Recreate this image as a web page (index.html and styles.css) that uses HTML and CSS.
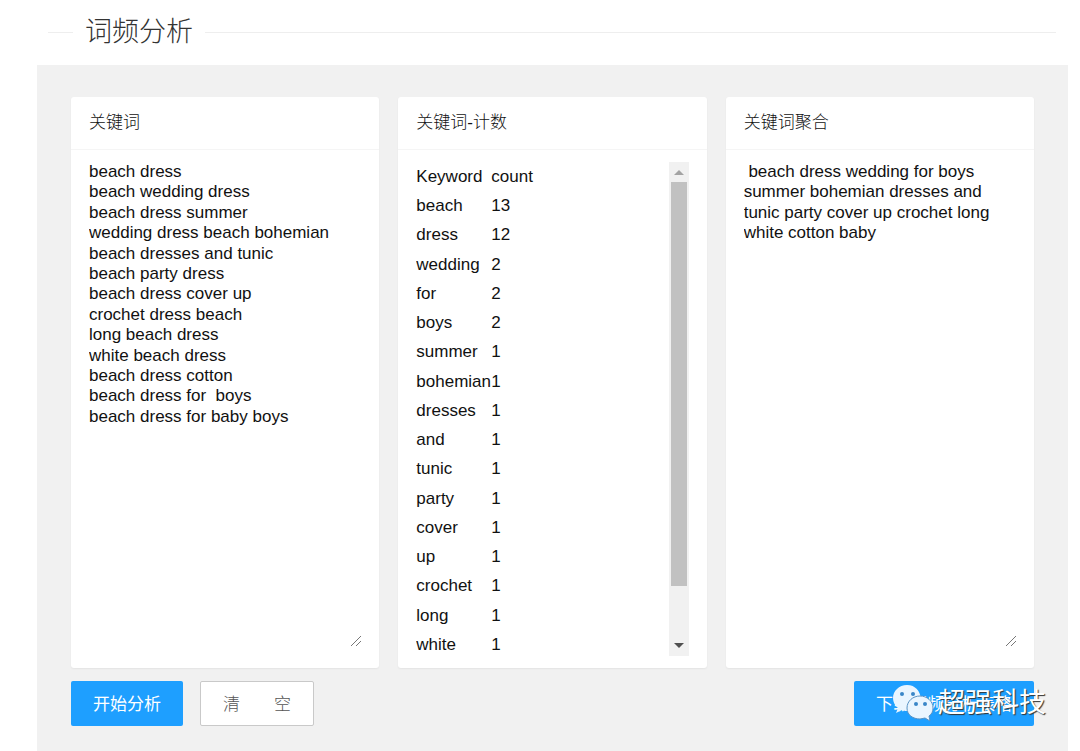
FILE: index.html
```html
<!DOCTYPE html>
<html lang="zh-CN">
<head>
    <meta charset="UTF-8">
    <meta name="viewport" content="width=device-width, initial-scale=1.0">
    <title>词频分析</title>
    <link rel="stylesheet" href="styles.css">
</head>
<body>
    <h1 class="page-title">词频分析</h1>

    <main class="panel">
        <div class="cards">
            <section class="card">
                <h2 class="card-header"><label for="keywords">关键词</label></h2>
                <div class="card-body">
                    <textarea id="keywords" class="text-box" spellcheck="false">beach dress
beach wedding dress
beach dress summer
wedding dress beach bohemian
beach dresses and tunic
beach party dress
beach dress cover up
crochet dress beach
long beach dress
white beach dress
beach dress cotton
beach dress for  boys
beach dress for baby boys</textarea>
                    <svg class="grip" viewBox="0 0 12 12"><path d="M1 11L11 1M6 11L11 6"/></svg>
                </div>
            </section>

            <section class="card">
                <h2 class="card-header">关键词-计数</h2>
                <div class="card-body">
                    <div class="scroll-box">
                        <table class="count-table">
                            <thead>
                                <tr><th>Keyword</th><th>count</th></tr>
                            </thead>
                            <tbody>
                                <tr><td>beach</td><td>13</td></tr>
                                <tr><td>dress</td><td>12</td></tr>
                                <tr><td>wedding</td><td>2</td></tr>
                                <tr><td>for</td><td>2</td></tr>
                                <tr><td>boys</td><td>2</td></tr>
                                <tr><td>summer</td><td>1</td></tr>
                                <tr><td>bohemian</td><td>1</td></tr>
                                <tr><td>dresses</td><td>1</td></tr>
                                <tr><td>and</td><td>1</td></tr>
                                <tr><td>tunic</td><td>1</td></tr>
                                <tr><td>party</td><td>1</td></tr>
                                <tr><td>cover</td><td>1</td></tr>
                                <tr><td>up</td><td>1</td></tr>
                                <tr><td>crochet</td><td>1</td></tr>
                                <tr><td>long</td><td>1</td></tr>
                                <tr><td>white</td><td>1</td></tr>
                            </tbody>
                        </table>
                    </div>
                    <div class="scrollbar">
                        <svg class="arrow arrow-off" viewBox="0 0 20 20"><path d="M5 13L10 8L15 13Z"/></svg>
                        <div class="track"><div class="thumb"></div></div>
                        <svg class="arrow" viewBox="0 0 20 20"><path d="M5 7L10 12L15 7Z"/></svg>
                    </div>
                </div>
            </section>

            <section class="card">
                <h2 class="card-header"><label for="merged">关键词聚合</label></h2>
                <div class="card-body">
                    <textarea id="merged" class="text-box" spellcheck="false"> beach dress wedding for boys summer bohemian dresses and tunic party cover up crochet long white cotton baby</textarea>
                    <svg class="grip" viewBox="0 0 12 12"><path d="M1 11L11 1M6 11L11 6"/></svg>
                </div>
            </section>
        </div>

        <div class="actions">
            <button type="button" class="btn">开始分析</button>
            <button type="button" class="btn btn-plain">清　　空</button>
            <div class="download">
                <button type="button" class="btn">下载词频分析表格</button>
                <div class="watermark">
                    <svg class="wechat" viewBox="0 0 42 38">
                        <path class="bubble" d="M15 1C7 1 1 7 1 14C1 18 3 22 6 24L4 29L10 26C12 27 15 27 17 27C34 27 32 1 15 1Z"/>
                        <circle class="eye" cx="10" cy="10" r="2"/>
                        <circle class="eye" cx="21" cy="10" r="2"/>
                        <path class="bubble front" d="M28 12C21 12 15 17 15 24C15 31 21 35 28 35L33 34L38 37L37 32C40 30 41 27 41 24C41 17 35 12 28 12Z"/>
                        <circle class="eye" cx="24" cy="20" r="2"/>
                        <circle class="eye" cx="33" cy="20" r="2"/>
                    </svg>
                    <span>超强科技</span>
                </div>
            </div>
        </div>
    </main>
</body>
</html>
```
FILE: styles.css
```css
* {
    box-sizing: border-box;
}
body {
    margin: 0;
    padding: 12px 12px 0 37px;
    min-height: 100vh;
    display: flex;
    flex-direction: column;
    font-family: "Liberation Sans", "Noto Sans CJK SC", sans-serif;
    font-size: 17px;
    color: #111;
    background-color: #fff;
}
.page-title {
    display: flex;
    align-items: center;
    gap: 12px;
    margin: 0 12px 13px 11px;
    font-size: 27px;
    font-weight: 300;
    line-height: 40px;
    color: #333;
}
.page-title::before,
.page-title::after {
    content: "";
    height: 1px;
    background-color: #eee;
}
.page-title::before {
    width: 25px;
}
.page-title::after {
    flex: 1;
}
.panel {
    flex: 1;
    display: flex;
    flex-direction: column;
    gap: 13px;
    padding: 32px 34px 25px;
    background-color: #f1f1f1;
}
.cards {
    flex: 1;
    display: grid;
    grid-template-columns: repeat(3, minmax(0, 1fr));
    gap: 19px;
}
.card {
    display: flex;
    flex-direction: column;
    background-color: #fff;
    border-radius: 3px;
    box-shadow: 0 1px 2px rgba(0, 0, 0, 0.06);
}
.card-header {
    margin: 0;
    padding: 0 18px;
    border-bottom: 1px solid #f5f5f5;
    font-size: 17px;
    font-weight: 300;
    line-height: 52px;
    color: #111;
}
.card-body {
    position: relative;
    flex: 1;
    display: flex;
    padding: 12px 18px;
}
.text-box {
    flex: 1;
    min-width: 0;
    margin-bottom: 8px;
    padding: 0;
    border: none;
    outline: none;
    resize: none;
    overflow: hidden;
    background: none;
    font: inherit;
    line-height: 1.2;
    color: inherit;
}
/* resize handle in the corner of the text box */
.grip {
    position: absolute;
    right: 17px;
    bottom: 21px;
    width: 12px;
    height: 12px;
    fill: none;
    stroke: #777;
    pointer-events: none;
}
.scroll-box {
    flex: 1;
    height: 0;
    min-height: 100%;
    overflow: hidden;
}
.count-table {
    border-collapse: collapse;
    line-height: 1.72;
}
.count-table th,
.count-table td {
    padding: 0;
    font-weight: 400;
    text-align: left;
}
.count-table th:first-child {
    width: 75px;
}
.scrollbar {
    display: flex;
    flex-direction: column;
    width: 20px;
    background-color: #f1f1f1;
}
.arrow {
    height: 20px;
    fill: #505050;
}
.arrow-off {
    fill: #a3a3a3;
}
.track {
    flex: 1;
    padding: 0 2px;
}
.thumb {
    height: 89%;
    background-color: #c1c1c1;
}
.actions {
    display: flex;
    gap: 17px;
}
.btn {
    height: 45px;
    padding: 0 22px 2px;
    border: none;
    border-radius: 2px;
    background-color: #1e9fff;
    color: #fff;
    font: inherit;
    white-space: nowrap;
    cursor: pointer;
}
.btn-plain {
    border: 1px solid #c9c9c9;
    background-color: #fff;
    color: #555;
    font-weight: 300;
}
.download {
    position: relative;
    margin-left: auto;
}
.watermark {
    position: absolute;
    top: 2px;
    right: -12px;
    display: flex;
    align-items: center;
    gap: 4px;
    font-size: 27px;
    line-height: 40px;
    color: #fff;
    text-shadow: 1px 1px 1px #333;
    white-space: nowrap;
    pointer-events: none;
}
.wechat {
    width: 42px;
    height: 38px;
}
.bubble {
    fill: #eaf5ff;
}
.front {
    stroke: #5a93c4;
}
.eye {
    fill: #3a86c8;
}
```
